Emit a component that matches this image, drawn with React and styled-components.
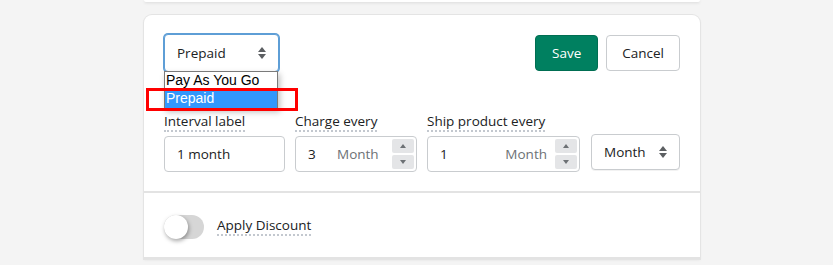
import React from 'react';
import styled, { createGlobalStyle } from 'styled-components';

const GlobalStyle = createGlobalStyle`
    body {
        margin: 0;
        background: #f4f4f4;
        font-family: "Open Sans", "Noto Sans", "Liberation Sans", sans-serif;
        color: #202223;
    }
`;

const Page = styled.div`
    width: 833px;
    height: 265px;
    overflow: hidden;
    padding-left: 144px;
    box-sizing: border-box;
`;

const PrevCard = styled.div`
    width: 556px;
    height: 2px;
    background: #fff;
    border-radius: 0 0 8px 8px;
    box-shadow: 0 1px 3px rgba(0, 0, 0, 0.12);
    margin-bottom: 13px;
`;

const Card = styled.div`
    width: 556px;
    background: #fff;
    border-radius: 8px 8px 0 0;
    box-shadow: 0 0 0 1px #e4e4e4, 0 1px 3px rgba(0, 0, 0, 0.08);
`;

const Section = styled.div`
    padding: ${(p) => p.pad};
    border-bottom: 2px solid #e3e3e3;
    position: relative;
`;

const TopRow = styled.div`
    display: flex;
    align-items: center;
    justify-content: space-between;
    height: 38px;
`;

const SelectWrap = styled.div`
    position: relative;
`;

const Select = styled.div`
    display: flex;
    align-items: center;
    justify-content: space-between;
    box-sizing: border-box;
    width: ${(p) => p.w}px;
    height: ${(p) => p.h}px;
    padding: 0 12px;
    background: #fff;
    border-radius: 4px;
    font-size: 13.5px;
    color: #202223;
    border: 1px solid ${(p) => (p.focused ? '#5e9ed6' : '#c9cccf')};
    box-shadow: ${(p) => (p.focused ? '0 0 0 1px #5e9ed6' : '0 1px 0 rgba(0,0,0,0.05)')};
`;

const Arrows = styled.svg`
    width: 8px;
    height: 12px;
    fill: #5c5f62;
`;

const Dropdown = styled.ul`
    position: absolute;
    left: 0;
    top: 37px;
    width: 114px;
    margin: 0;
    padding: 0;
    list-style: none;
    background: #fff;
    border: 1px solid #7a7a7a;
    box-sizing: border-box;
    font-family: "Liberation Sans", Arial, sans-serif;
    font-size: 14px;
    box-shadow: 2px 3px 6px rgba(0, 0, 0, 0.25);
    z-index: 2;
`;

const Option = styled.li`
    height: 18px;
    line-height: 17px;
    padding-left: 1px;
    color: ${(p) => (p.active ? '#fff' : '#000')};
    background: ${(p) => (p.active ? '#3297fd' : '#fff')};
`;

const Highlight = styled.div`
    position: absolute;
    left: 2px;
    top: 73px;
    width: 152px;
    height: 23px;
    box-sizing: border-box;
    border: 3px solid #ff0000;
    z-index: 3;
`;

const Buttons = styled.div`
    display: flex;
    gap: 8px;
`;

const Button = styled.button`
    height: 36px;
    padding: 0 ${(p) => p.padX}px;
    border-radius: 4px;
    font-family: inherit;
    font-size: 13.5px;
    cursor: pointer;
    color: ${(p) => (p.primary ? '#fff' : '#202223')};
    background: ${(p) => (p.primary ? '#008060' : '#fff')};
    border: 1px solid ${(p) => (p.primary ? '#006e52' : '#c9cccf')};
`;

const FieldRow = styled.div`
    display: flex;
    align-items: flex-end;
    gap: 10px;
    margin-top: 41px;
`;

const Field = styled.div`
    display: flex;
    flex-direction: column;
    width: ${(p) => p.w}px;
`;

const Label = styled.span`
    align-self: flex-start;
    font-size: 13.5px;
    line-height: 17px;
    border-bottom: 2px dotted #c3c8cf;
    margin-bottom: 4px;
`;

const Input = styled.div`
    display: flex;
    align-items: center;
    box-sizing: border-box;
    height: 36px;
    padding: 0 2px 0 12px;
    border: 1px solid #c9cccf;
    border-radius: 4px;
    font-size: 13.5px;
    color: #202223;
`;

const Value = styled.span`
    width: ${(p) => p.w || 'auto'};
`;

const Suffix = styled.span`
    color: #6d7175;
    flex: 1;
    text-align: ${(p) => p.align || 'left'};
    padding-right: 8px;
`;

const Spinner = styled.div`
    display: flex;
    flex-direction: column;
    gap: 2px;
`;

const SpinBtn = styled.div`
    width: 22px;
    height: 14px;
    background: #e4e5e7;
    border-radius: 2px;
    display: flex;
    align-items: center;
    justify-content: center;
    &::after {
        content: '';
        border-left: 3px solid transparent;
        border-right: 3px solid transparent;
        ${(p) => (p.down ? 'border-top: 4px solid #6d7175;' : 'border-bottom: 4px solid #6d7175;')}
    }
`;

const UnitSelect = styled(Select)`
    margin-left: 1px;
    margin-bottom: 2px;
`;

const ToggleRow = styled.div`
    display: flex;
    align-items: center;
    gap: 13px;
    height: 61px;
    padding-top: 3px;
`;

const Toggle = styled.div`
    position: relative;
    width: 40px;
    height: 24px;
    border-radius: 12px;
    background: #d6d6d6;
    &::after {
        content: '';
        position: absolute;
        left: 0;
        top: 0;
        width: 24px;
        height: 24px;
        border-radius: 50%;
        background: #fff;
        box-shadow: 1px 2px 4px rgba(0, 0, 0, 0.35);
    }
`;

const ToggleLabel = styled.span`
    font-size: 13.5px;
    line-height: 17px;
    border-bottom: 2px dotted #c3c8cf;
`;

const Updown = () => (
    <Arrows viewBox="0 0 8 12">
        <path d="M4 0 L8 5 H0 Z" />
        <path d="M0 7 H8 L4 12 Z" />
    </Arrows>
);

const NumberInput = ({ value, suffix, valueWidth, align }) => (
    <Input>
        <Value w={valueWidth}>{value}</Value>
        <Suffix align={align}>{suffix}</Suffix>
        <Spinner>
            <SpinBtn />
            <SpinBtn down />
        </Spinner>
    </Input>
);

const App = () => (
    <Page>
        <GlobalStyle />
        <PrevCard />
        <Card>
            <Section pad="19px 20px 19px 20px">
                <TopRow>
                    <SelectWrap>
                        <Select w={115} h={38} focused>
                            Prepaid
                            <Updown />
                        </Select>
                        <Dropdown>
                            <Option>Pay As You Go</Option>
                            <Option active>Prepaid</Option>
                        </Dropdown>
                    </SelectWrap>
                    <Buttons>
                        <Button primary padX={16}>Save</Button>
                        <Button padX={15}>Cancel</Button>
                    </Buttons>
                </TopRow>
                <Highlight />
                <FieldRow>
                    <Field w={121}>
                        <Label>Interval label</Label>
                        <Input>1 month</Input>
                    </Field>
                    <Field w={122}>
                        <Label>Charge every</Label>
                        <NumberInput value="3" suffix="Month" valueWidth="29px" />
                    </Field>
                    <Field w={153}>
                        <Label>Ship product every</Label>
                        <NumberInput value="1" suffix="Month" align="right" />
                    </Field>
                    <UnitSelect w={89} h={36}>
                        Month
                        <Updown />
                    </UnitSelect>
                </FieldRow>
            </Section>
            <Section pad="0 20px">
                <ToggleRow>
                    <Toggle />
                    <ToggleLabel>Apply Discount</ToggleLabel>
                </ToggleRow>
            </Section>
        </Card>
    </Page>
);

export default App;
